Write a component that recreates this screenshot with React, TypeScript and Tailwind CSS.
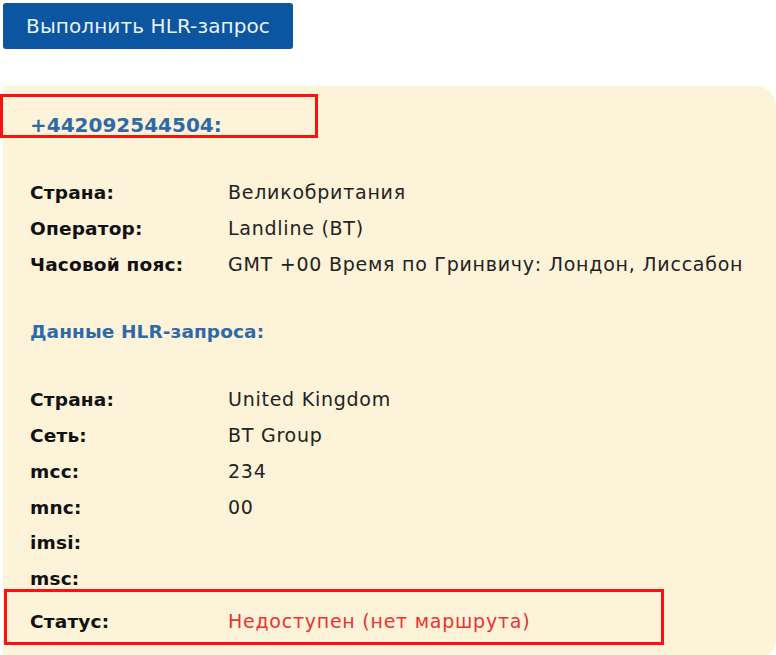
const font = { fontFamily: '"DejaVu Sans", "Noto Sans", sans-serif' };

type Row = { label: string; value?: string; red?: boolean };

const phoneRows: Row[] = [
  { label: "Страна:", value: "Великобритания" },
  { label: "Оператор:", value: "Landline (BT)" },
  { label: "Часовой пояс:", value: "GMT +00 Время по Гринвичу: Лондон, Лиссабон" },
];

const hlrRows: Row[] = [
  { label: "Страна:", value: "United Kingdom" },
  { label: "Сеть:", value: "BT Group" },
  { label: "mcc:", value: "234" },
  { label: "mnc:", value: "00" },
  { label: "imsi:" },
  { label: "msc:" },
];

function InfoRow({ label, value, red }: Row) {
  return (
    <div className="flex h-9 items-baseline leading-9">
      <span className="w-[198px] shrink-0 text-[18.5px] font-bold tracking-[0.2px] text-[#111]">{label}</span>
      <span className={`text-[19px] tracking-[0.75px] ${red ? "text-[#ec3232]" : "text-[#222]"}`}>{value}</span>
    </div>
  );
}

export default function App() {
  return (
    <div className="w-[776px] h-[655px] overflow-hidden bg-white pl-[3px] pt-[3px]" style={font}>
      <button
        type="button"
        className="h-[46px] w-[290px] rounded-[3px] bg-[#0b55a1] text-[20px] text-[#eaf1fa] tracking-[0.1px]"
      >
        Выполнить HLR-запрос
      </button>

      <div className="relative mt-[37px] rounded-r-[20px] bg-[#fdf3d8] pl-[27px] pt-[24px] pb-[20px]">
        <div className="flex h-[30px] items-center text-[20px] font-bold text-[#2f6aa8]">+442092544504:</div>

        <div className="mt-[34px]">
          {phoneRows.map((r) => (
            <InfoRow key={r.label} {...r} />
          ))}
        </div>

        <div className="mt-[35px] flex h-[30px] items-center text-[18.5px] font-bold tracking-[0.1px] text-[#2f6aa8]">
          Данные HLR-запроса:
        </div>

        <div className="mt-[34px]">
          {hlrRows.map((r) => (
            <InfoRow key={r.label} {...r} />
          ))}
        </div>
        <div className="mt-[6px]">
          <InfoRow label="Статус:" value="Недоступен (нет маршрута)" red />
        </div>

        {/* annotation frames */}
        <div className="pointer-events-none absolute left-[-3px] top-[8px] h-[44px] w-[318px] border-[3px] border-[#ff1010]" />
        <div className="pointer-events-none absolute left-[1px] top-[503px] h-[56px] w-[660px] border-[3px] border-[#ff1010]" />
      </div>
    </div>
  );
}
